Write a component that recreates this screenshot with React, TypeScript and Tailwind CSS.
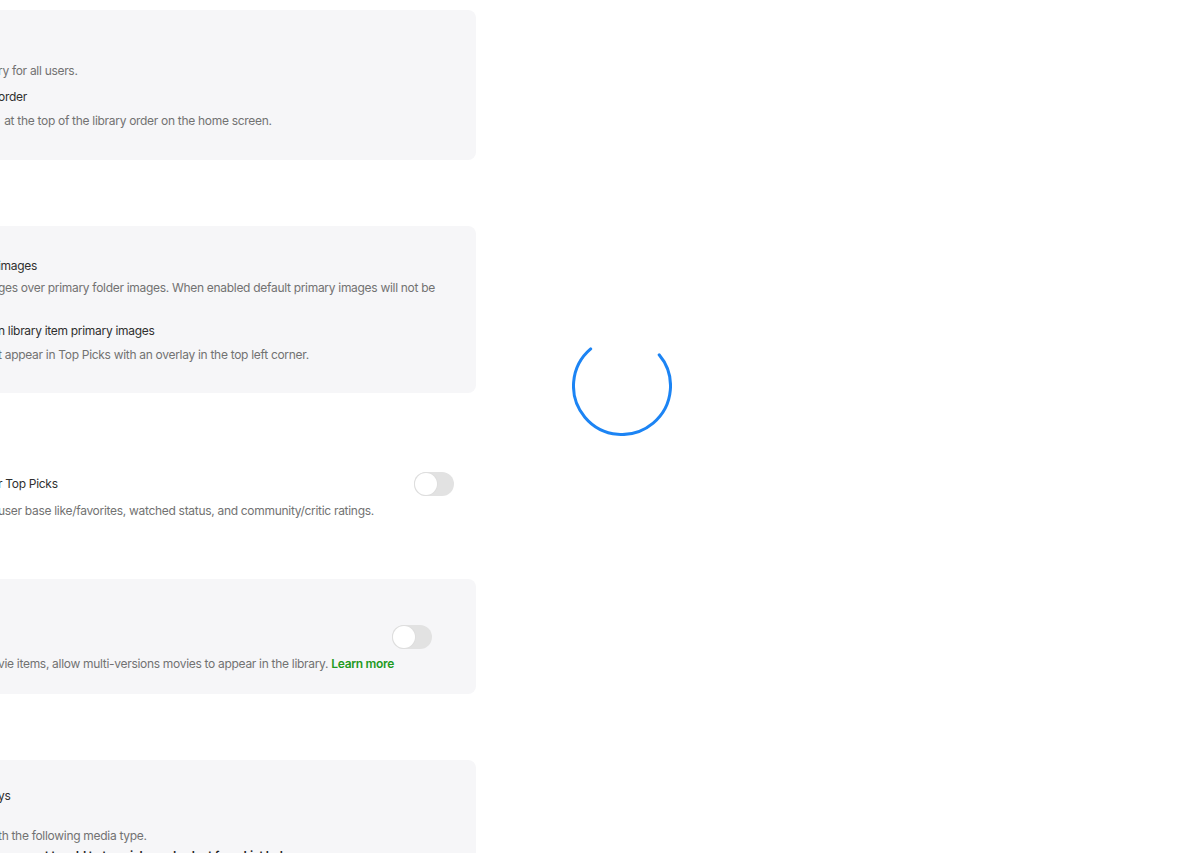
import React from 'react';

const Toggle = () => (
  <div className="w-[40px] h-[24px] rounded-full bg-[#e2e2e2] p-[1px] flex items-center shrink-0">
    <div className="w-[22px] h-[22px] rounded-full bg-white shadow-[0_0_0_1px_#dedede]" />
  </div>
);

const Title = ({ children }: { children: React.ReactNode }) => (
  <div className="text-[12px] tracking-[-0.3px] leading-[20px] text-[#2f2f2f] whitespace-nowrap">{children}</div>
);

const Desc = ({ children }: { children: React.ReactNode }) => (
  <div className="text-[12px] tracking-[-0.3px] leading-[20px] text-[#727272] whitespace-nowrap">{children}</div>
);

const Spinner = () => (
  <svg width="100" height="100" viewBox="0 0 100 100" className="block">
    <circle
      cx="50"
      cy="50"
      r="48.5"
      fill="none"
      stroke="#1c84f4"
      strokeWidth="3"
      strokeLinecap="round"
      strokeDasharray="228 77"
      transform="rotate(-40 50 50)"
    />
  </svg>
);

export default function App() {
  return (
    <div className="relative min-h-screen bg-white overflow-hidden font-['Inter','Noto_Sans',sans-serif]">
      <div className="flex flex-col w-[516px] -ml-[40px] pt-[10px]">
        {/* library visibility */}
        <div className="h-[150px] rounded-lg bg-[#f6f6f8] pl-[38px] pt-[49px]">
          <div className="text-[12px] tracking-[-0.3px] leading-[24px] text-[#727272] whitespace-nowrap">ry for all users.</div>
          <div className="text-[12px] tracking-[-0.3px] leading-[25px] pt-[1px] text-[#2f2f2f] whitespace-nowrap">order</div>
          <div className="text-[12px] tracking-[-0.3px] leading-[24px] text-[#727272] whitespace-nowrap">&nbsp;&nbsp;at the top of the library order on the home screen.</div>
        </div>

        {/* images */}
        <div className="mt-[66px] h-[167px] rounded-lg bg-[#f6f6f8] pl-[38px] pt-[30px]">
          <Title>images</Title>
          <div className="mt-[2px]">
            <Desc>ges over primary folder images. When enabled default primary images will not be</Desc>
          </div>
          <Desc>&nbsp;</Desc>
          <div className="mt-[3px]">
            <Title>n library item primary images</Title>
          </div>
          <div className="mt-[4px]">
            <Desc>t appear in Top Picks with an overlay in the top left corner.</Desc>
          </div>
        </div>

        {/* rating */}
        <div className="mt-[79px] pl-[38px] pr-[22px]">
          <div className="h-[24px] flex items-center justify-between">
            <Title>r Top Picks</Title>
            <Toggle />
          </div>
          <div className="mt-[5px]">
            <Desc>user base like/favorites, watched status, and community/critic ratings.</Desc>
          </div>
        </div>

        {/* multi-versions */}
        <div className="mt-[58px] h-[115px] rounded-lg bg-[#f6f6f8] pl-[38px] pr-[44px] pt-[46px]">
          <div className="h-[24px] flex items-center justify-end">
            <Toggle />
          </div>
          <div className="mt-[5px]">
            <Desc>
              vie items, allow multi-versions movies to appear in the library.{' '}
              <a className="font-semibold text-[#1f9a1f] cursor-pointer">Learn more</a>
            </Desc>
          </div>
        </div>

        {/* media types */}
        <div className="mt-[66px] h-[140px] rounded-lg bg-[#f6f6f8] pl-[38px] pt-[26px]">
          <Title>ys</Title>
          <div className="mt-[20px]">
            <Desc>th the following media type.</Desc>
          </div>
          <div className="text-[12px] tracking-[-0.3px] leading-[20px] font-semibold text-[#1f1f1f] whitespace-nowrap">
            you want to add to top picks and select from List below
          </div>
        </div>
      </div>

      <div className="absolute left-[572px] top-[336px]">
        <Spinner />
      </div>
    </div>
  );
}
